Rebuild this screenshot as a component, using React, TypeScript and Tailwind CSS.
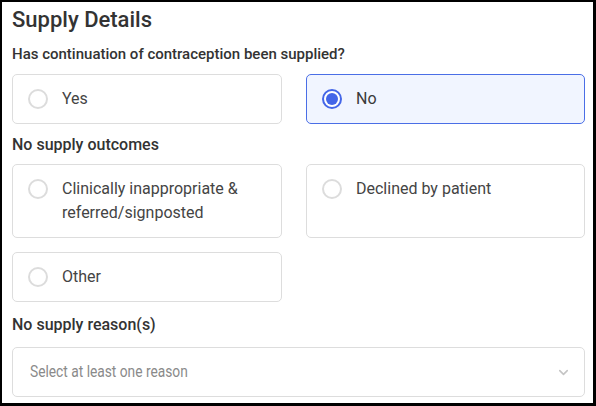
import { useState } from "react";

interface Option {
  id: string;
  label: string;
}

const SUPPLY_OPTIONS: Option[] = [
  { id: "yes", label: "Yes" },
  { id: "no", label: "No" },
];

const OUTCOME_OPTIONS: Option[] = [
  { id: "clinical", label: "Clinically inappropriate & referred/signposted" },
  { id: "declined", label: "Declined by patient" },
  { id: "other", label: "Other" },
];

function RadioCard({
  option,
  checked,
  onSelect,
}: {
  option: Option;
  checked: boolean;
  onSelect: () => void;
}) {
  return (
    <button
      type="button"
      onClick={onSelect}
      className={`flex items-start gap-[14px] rounded-[5px] border py-[12px] pl-[15px] pr-4 text-left text-[16px] leading-[24px] ${
        checked
          ? "border-[#4a6ee6] bg-[#f1f5ff] text-[#3a3a3a]"
          : "border-[#dddddd] bg-white text-[#444]"
      }`}
    >
      <span
        className={`mt-[2px] flex h-[20px] w-[20px] shrink-0 items-center justify-center rounded-full border-2 ${
          checked ? "border-[#4466e8] bg-white" : "border-[#dcdcdc] bg-white"
        }`}
      >
        {checked && <span className="h-[12px] w-[12px] rounded-full bg-[#4466e8]" />}
      </span>
      <span>{option.label}</span>
    </button>
  );
}

export default function App() {
  const [supplied, setSupplied] = useState("no");
  const [outcome, setOutcome] = useState<string | null>(null);

  return (
    <div
      className="box-border h-[406px] w-[596px] border-b-[3px] border-l-2 border-r-[3px] border-t-2 border-black bg-white pl-[10px] pr-[8px] pt-[4px] text-[#333]"
      style={{ fontFamily: "Roboto, 'Liberation Sans', sans-serif" }}
    >
      <h1 className="text-[22px] font-medium leading-[28px] text-[#333]">Supply Details</h1>

      <p className="mt-[10px] text-[15px] font-medium leading-[20px] text-[#333]">
        Has continuation of contraception been supplied?
      </p>
      <div className="mt-[10px] grid grid-cols-[270px_1fr] gap-x-[24px]">
        {SUPPLY_OPTIONS.map((o) => (
          <RadioCard
            key={o.id}
            option={o}
            checked={supplied === o.id}
            onSelect={() => setSupplied(o.id)}
          />
        ))}
      </div>

      <p className="mt-[11px] text-[16px] font-medium leading-[20px] text-[#333]">
        No supply outcomes
      </p>
      <div className="mt-[9px] grid grid-cols-[270px_1fr] gap-x-[24px] gap-y-[14px]">
        {OUTCOME_OPTIONS.map((o) => (
          <RadioCard
            key={o.id}
            option={o}
            checked={outcome === o.id}
            onSelect={() => setOutcome(o.id)}
          />
        ))}
      </div>

      <p className="mt-[13px] text-[16px] font-medium leading-[20px] text-[#333]">
        No supply reason(s)
      </p>
      <button
        type="button"
        className="mt-[12px] flex h-[50px] w-full items-center justify-between rounded-[5px] border border-[#dddddd] bg-white pl-[17px] pr-[13px] text-left text-[16px] text-[#8a8a8a]"
      >
        <span className="inline-block origin-left scale-x-[0.86] whitespace-nowrap">
          Select at least one reason
        </span>
        <svg
          aria-hidden="true"
          width="15"
          height="15"
          viewBox="0 0 24 24"
          fill="none"
          stroke="#c4c4c4"
          strokeWidth="2.5"
          strokeLinecap="round"
          strokeLinejoin="round"
        >
          <path d="m6 9 6 6 6-6" />
        </svg>
      </button>
    </div>
  );
}
